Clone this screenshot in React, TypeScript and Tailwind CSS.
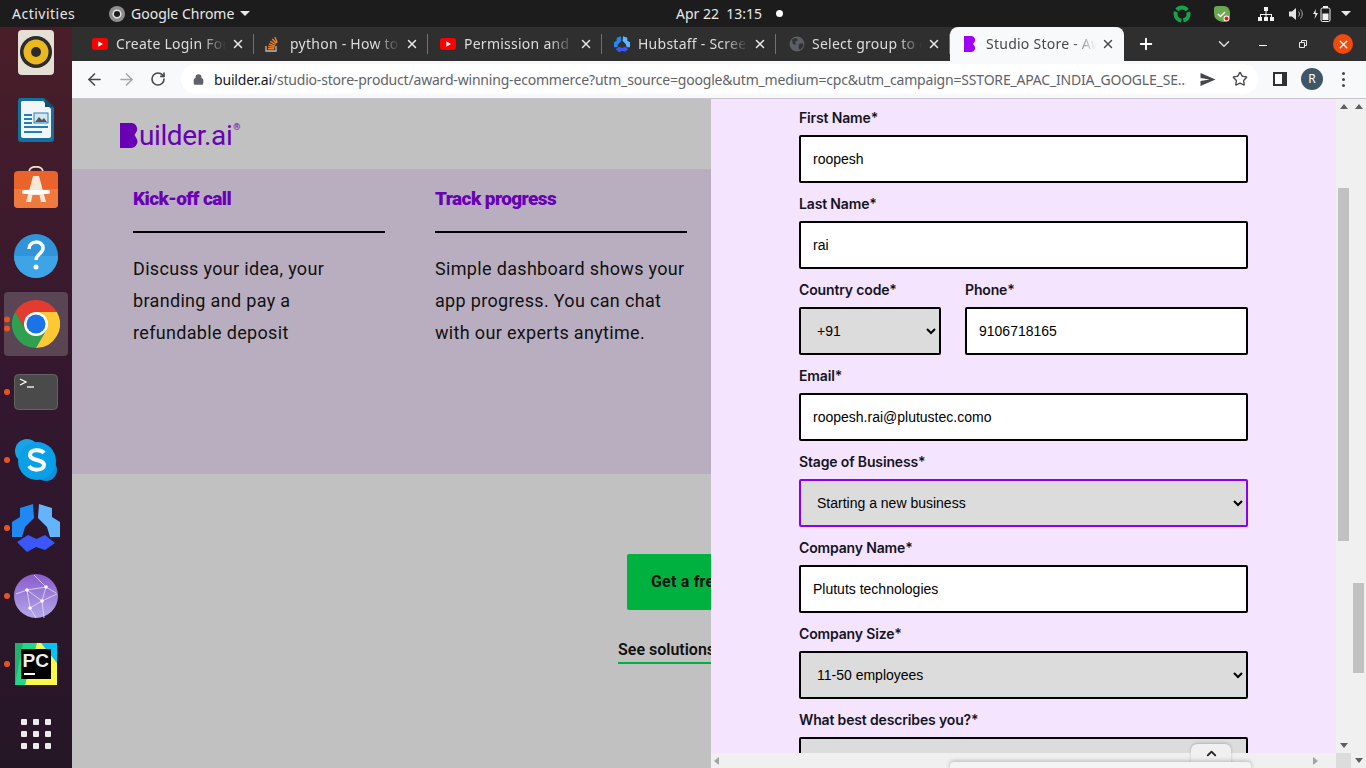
import { ArrowLeft, ArrowRight, ChevronDown, ChevronUp, Lock, Plus, RotateCw, Star, X } from 'lucide-react';

const uiFont = "font-['Noto_Sans',sans-serif]";

const YouTube = () => (
  <svg width="16" height="12" viewBox="0 0 16 12">
    <rect width="16" height="12" rx="3" fill="#f00" />
    <path d="M6.3 3.2 11 6 6.3 8.8z" fill="#fff" />
  </svg>
);

const StackOverflow = () => (
  <svg width="14" height="16" viewBox="0 0 14 16">
    <path d="M1 10v5h10v-5" fill="none" stroke="#bcbbbb" strokeWidth="1.3" />
    <path d="M3 12.7h6.2M3.2 10.5l6.2.8M3.9 8l5.9 1.8M5.3 5.4l5.3 3.1M7.2 3l4.2 4.3M9.8 1l2.4 5.6" stroke="#f48024" strokeWidth="1.4" />
  </svg>
);

// same mark as the dock icon, the tab just shows it smaller
const HubstaffMark = ({ size }: { size: number }) => (
  <svg width={size} height={size * 50 / 48} viewBox="0 0 48 50">
    <path d="M8 5 21 1 22 15 13 24 10 34H0V19L8 14z" fill="#2088f2" />
    <path d="M40 5 27 1 26 15 35 24 38 34H48V19L40 14z" fill="#63b4ff" />
    <path d="M5 39 16 32 24.500 36 33 32 43 40 33 47 24 44 15 49z" fill="#3a57fa" />
  </svg>
);

const GlobeFavicon = () => (
  <svg width="16" height="16" viewBox="0 0 16 16">
    <circle cx="8" cy="8" r="7.5" fill="#5b5e63" />
    <path d="M3 3.5 7 2l2 2-3 2 1 3-3-1zM10 8l4-1 .5 3-3.5 4-1.500-2z" fill="#303134" />
  </svg>
);

const StudioFavicon = () => (
  <svg width="12" height="16" viewBox="0 0 12 16">
    <path d="M0 0h7a4 4 0 0 1 3.200 6.500L9 8l1.200 1.500A4 4 0 0 1 7 16H0z" fill="#a000f8" />
  </svg>
);

const tabs = [
  { title: 'Create Login Form', icon: <YouTube />, iconWidth: 'pl-3', textGap: 'ml-2' },
  { title: 'python - How to fix', icon: <StackOverflow />, iconWidth: 'pl-[10px]', textGap: 'ml-[10px]' },
  { title: 'Permission and Access', icon: <YouTube />, iconWidth: 'pl-3', textGap: 'ml-2' },
  { title: 'Hubstaff - Screenshots', icon: <HubstaffMark size={16} />, iconWidth: 'pl-3', textGap: 'ml-2' },
  { title: 'Select group to change', icon: <GlobeFavicon />, iconWidth: 'pl-[13px]', textGap: 'ml-[7px]' },
];

const tabTextClass =
  'w-[110px] overflow-hidden whitespace-nowrap pb-[2px] text-[14px] tracking-[0.25px] [mask-image:linear-gradient(to_right,black_78%,transparent_100%)]';

function Tab({ title, icon, iconWidth, textGap }: { title: string; icon: React.ReactNode; iconWidth: string; textGap: string }) {
  return (
    <div className={`flex h-[34px] w-[174px] shrink-0 items-center ${iconWidth}`}>
      <span className="flex w-4 shrink-0 justify-center">{icon}</span>
      <span className={`${tabTextClass} text-[#dcdddd] ${textGap}`}>{title}</span>
      <X size={14} strokeWidth={2.5} className="ml-auto mr-[8px] text-[#e8eaed]" />
      <span className="h-5 w-px bg-[#6f7174]" />
    </div>
  );
}

function TabStrip() {
  return (
    <div className={`flex h-[34px] items-center bg-[#2f2f2f] pl-2 ${uiFont}`}>
      {tabs.map((t) => (
        <Tab key={t.title} {...t} />
      ))}
      <div className="flex h-[34px] w-[174px] shrink-0 items-center rounded-t-[8px] bg-[#f8f9fa] pl-[14px]">
        <StudioFavicon />
        <span className={`${tabTextClass} ml-[10px] text-[#45474a]`}>Studio Store - Award</span>
        <X size={14} strokeWidth={2.5} className="ml-auto mr-[9px] text-[#45474a]" />
      </div>
      <Plus size={18} strokeWidth={2.5} className="ml-[13px] text-white" />
      <ChevronDown size={18} strokeWidth={2} className="ml-[60px] text-[#dcdddd]" />
      <span className="ml-[26px] mt-[2px] h-px w-2 bg-white" />
      <svg width="8" height="8" viewBox="0 0 8 8" className="ml-[32px]">
        <path d="M.5 2.500h5v5h-5zM2.500 2.500V.5h5v5h-2" fill="none" stroke="#e8eaed" />
      </svg>
      <span className="ml-[26px] flex h-5 w-5 items-center justify-center rounded-full bg-[#ef4b0d]">
        <X size={13} strokeWidth={2.5} className="text-white" />
      </span>
    </div>
  );
}

function Toolbar() {
  return (
    <div className={`flex h-[38px] items-center border-b border-[#c9c4cc] bg-[#f8f9fa] pb-px ${uiFont}`}>
      <ArrowLeft size={19} strokeWidth={2} className="ml-[13px] text-[#45474a]" />
      <ArrowRight size={19} strokeWidth={2} className="ml-[13px] text-[#a5a7a9]" />
      <RotateCw size={16} strokeWidth={2.4} className="ml-[14px] text-[#45474a]" />
      <div className="ml-[15px] flex h-[30px] w-[1077px] shrink-0 items-center rounded-full bg-white pl-[12px]">
        <Lock size={11} strokeWidth={3} className="shrink-0 text-[#5f6368]" fill="#5f6368" />
        <span className="ml-[10px] w-[972px] shrink-0 overflow-hidden whitespace-nowrap text-[14px] tracking-[-0.19px] text-[#5f6368]">
          <span className="text-[#111827]">builder.ai</span>
          /studio-store-product/award-winning-ecommerce?utm_source=google&amp;utm_medium=cpc&amp;utm_campaign=SSTORE_APAC_INDIA_GOOGLE_SE...
        </span>
        <svg width="16" height="13" viewBox="0 0 16 13" className="ml-[14px] shrink-0">
          <path d="M.5 0 15.500 6.500.5 13V8l9-1.500L.5 5z" fill="#45474a" />
        </svg>
        <Star size={16} strokeWidth={2} className="ml-[16px] shrink-0 text-[#45474a]" />
      </div>
      <svg width="14" height="14" viewBox="0 0 14 14" className="ml-[15px] shrink-0">
        <path d="M1 1h12v12H1z" fill="#fff" stroke="#303134" strokeWidth="2" />
        <path d="M9 1h4v12H9z" fill="#303134" />
      </svg>
      <span className="ml-[14px] flex h-[22px] w-[22px] shrink-0 items-center justify-center rounded-full bg-[#3f5666] text-[12px] text-white">R</span>
      <span className="ml-[19px] flex flex-col gap-[3px]">
        <span className="h-[3px] w-[3px] rounded-full bg-[#45474a]" />
        <span className="h-[3px] w-[3px] rounded-full bg-[#45474a]" />
        <span className="h-[3px] w-[3px] rounded-full bg-[#45474a]" />
      </span>
    </div>
  );
}

function TopBar() {
  return (
    <div className={`relative z-10 flex h-[27px] items-center bg-[#1c1c1c] text-[14px] text-[#e8e8e8] ${uiFont}`}>
      <span className="ml-3 w-[63px] tracking-[0.5px]">Activities</span>
      <svg width="16" height="16" viewBox="0 0 16 16" className="ml-[34px]">
        <circle cx="8" cy="8" r="8" fill="#8e8e8e" />
        <circle cx="8" cy="8" r="3.800" fill="#1c1c1c" stroke="#e4e4e4" strokeWidth="1.500" />
      </svg>
      <span className="ml-[6px] w-[104px]">Google Chrome</span>
      <span className="ml-[5px] h-0 w-0 border-x-[5px] border-t-[5px] border-x-transparent border-t-[#e8e8e8]" />
      <span className="ml-[426px] w-[87px] whitespace-nowrap">Apr 22&nbsp; 13:15</span>
      <span className="ml-[13px] h-[7px] w-[7px] rounded-full bg-white" />
      <svg width="18" height="18" viewBox="0 0 18 18" className="ml-[390px]">
        <circle cx="9" cy="9" r="6.500" fill="none" stroke="#14a44d" strokeWidth="4" strokeDasharray="11.600 2" strokeDashoffset="3" />
      </svg>
      <svg width="18" height="18" viewBox="0 0 18 18" className="ml-[22px]">
        <path d="M1 4q0-3 3-3h7q5 0 6 6v4q-1 6-7 6-9-1-9-9z" fill="#6aa84f" />
        <path d="M5 9l2.500 2.500L12 7" fill="none" stroke="#fff" strokeWidth="1.500" />
        <circle cx="13.500" cy="13.500" r="3" fill="#fff" />
        <circle cx="13.500" cy="13.500" r="2" fill="#e0201b" />
      </svg>
      <svg width="16" height="14" viewBox="0 0 16 14" className="ml-[27px]">
        <path d="M6 0h4v4H6zM0 10h4v4H0zM6 10h4v4H6zM12 10h4v4h-4zM7.500 4h1v3h5.500v3h-1V8H8.500v2h-1V8H3v2H2V7h5.500z" fill="#f2f2f2" />
      </svg>
      <svg width="15" height="14" viewBox="0 0 15 14" className="ml-[15px]">
        <path d="M0 4.500h3L7 1v12L3 9.500H0z" fill="#e4e4e4" />
        <path d="M9.500 4.500a3.500 3.500 0 0 1 0 5M11.500 2.500a6.500 6.500 0 0 1 0 9" fill="none" stroke="#a9a9a9" />
      </svg>
      <svg width="20" height="16" viewBox="0 0 20 16" className="ml-[9px]">
        <path d="M3 3 0 8h2.500L1.500 13 5 7H2.500z" fill="#f2f2f2" />
        <rect x="8" y="2" width="9" height="13.500" rx="1.500" fill="none" stroke="#f2f2f2" />
        <rect x="10" y="0" width="5" height="2" fill="#f2f2f2" />
        <rect x="9.500" y="7.500" width="6" height="6.500" fill="#f2f2f2" />
      </svg>
      <span className="ml-[8px] h-0 w-0 border-x-[5px] border-t-[5px] border-x-transparent border-t-[#e8e8e8]" />
    </div>
  );
}

function DockItem({ running = 0, active = false, children }: { running?: number; active?: boolean; children: React.ReactNode }) {
  return (
    <div className="relative flex h-[68px] items-center justify-center">
      {active && <span className="absolute inset-x-1 inset-y-0.5 rounded-[4px] bg-[#5a4555]" />}
      <span className="relative">{children}</span>
      {running > 0 && (
        <span className="absolute left-[4px] top-1/2 flex -translate-y-1/2 flex-col gap-[3px]">
          {Array.from({ length: running }).map((_, i) => (
            <span key={i} className="h-[6px] w-[6px] rounded-full bg-[#e95420]" />
          ))}
        </span>
      )}
    </div>
  );
}

function Dock() {
  return (
    <div className="-mt-[9px] flex w-[72px] shrink-0 flex-col bg-gradient-to-b from-[#4a1e28] via-[#33172f] to-[#251626]">
      <DockItem>
        <svg width="36" height="45" viewBox="0 0 36 45">
          <rect width="36" height="45" rx="4" fill="#e4e0d5" />
          <circle cx="18" cy="22" r="16" fill="#2b2b2b" />
          <circle cx="18" cy="22" r="12.500" fill="#eab922" />
          <circle cx="18" cy="22" r="5" fill="#2b2b2b" />
        </svg>
      </DockItem>
      <DockItem>
        <svg width="36" height="44" viewBox="0 0 36 44">
          <path d="M3 0h23l10 10v31a3 3 0 0 1-3 3H3a3 3 0 0 1-3-3V3a3 3 0 0 1 3-3z" fill="#176f9f" />
          <path d="M4 3h21l8 8v27a2 2 0 0 1-2 2H5a2 2 0 0 1-2-2V4z" fill="#f3f6f8" />
          <path d="M27 0l9 9h-9z" fill="#124f72" />
          <path d="M6 16h8v2H6zM6 20h8v2H6zM6 24h8v2H6zM6 28h24v2H6zM6 33h18v2H6z" fill="#1d80b8" />
          <rect x="16" y="15" width="14" height="10" fill="#d6e6f2" stroke="#1d80b8" />
          <path d="M17 24l4-5 3 3 2-2 3 4z" fill="#555" />
        </svg>
      </DockItem>
      <DockItem>
        <svg width="44" height="44" viewBox="0 0 44 44">
          <path d="M15 6c0-7 14-7 14 0" fill="none" stroke="#f0d9c0" strokeWidth="2" />
          <rect y="5" width="44" height="37" rx="4" fill="#e9632b" />
          <path d="M0 23h44v15a4 4 0 0 1-4 4H4a4 4 0 0 1-4-4z" fill="#f07a3e" />
          <path d="M19 10h6l7 26h-5l-1.500-7h-7L17 36h-5z" fill="#fbe7d8" />
          <rect x="8" y="24" width="28" height="4" rx="2" fill="#fff" />
        </svg>
      </DockItem>
      <DockItem>
        <svg width="44" height="44" viewBox="0 0 44 44">
          <circle cx="22" cy="22" r="22" fill="#2f94d9" />
          <path d="M0 22a22 22 0 0 0 44 0z" fill="#3da4e6" />
          <path d="M15 15c0-9 14-9 14-1 0 6-7 6-7 12" fill="none" stroke="#fff" strokeWidth="3.500" />
          <circle cx="22" cy="33" r="2.500" fill="#fff" />
        </svg>
      </DockItem>
      <DockItem active running={2}>
        <svg width="48" height="48" viewBox="0 0 48 48">
          <path d="M24 12H44.800A24 24 0 0 0 3.200 12L13.600 30z" fill="#e33b2e" />
          <path d="M13.600 30 3.200 12A24 24 0 0 0 24 48L34.400 30z" fill="#2fa04f" />
          <path d="M34.400 30 24 48A24 24 0 0 0 44.800 12H24z" fill="#fcc934" />
          <circle cx="24" cy="24" r="12" fill="#fff" />
          <circle cx="24" cy="24" r="9.500" fill="#1a73e8" />
        </svg>
      </DockItem>
      <DockItem running={1}>
        <svg width="44" height="36" viewBox="0 0 44 36">
          <rect x="0.500" y="0.500" width="43" height="35" rx="4" fill="#4a4a4a" stroke="#636363" />
          <path d="M6 5l6 3-6 3" fill="none" stroke="#fff" strokeWidth="1.300" />
          <path d="M13 13h7" stroke="#fff" strokeWidth="1.300" />
        </svg>
      </DockItem>
      <DockItem running={1}>
        <svg width="42" height="42" viewBox="0 0 42 42">
          <circle cx="12" cy="12" r="12" fill="#17a3e6" />
          <circle cx="31" cy="31" r="11" fill="#0f8fd6" />
          <circle cx="22" cy="22" r="19" fill="#0aa0e8" />
          <path d="M29 14c-3-4-14-4-14 2 0 6 14 4 14 10 0 6-12 6-15 1" fill="none" stroke="#fff" strokeWidth="4" />
        </svg>
      </DockItem>
      <DockItem running={1}>
        <HubstaffMark size={48} />
      </DockItem>
      <DockItem running={1}>
        <svg width="44" height="44" viewBox="0 0 44 44">
          <defs>
            <linearGradient id="globeFill" x1="0" y1="0" x2="0" y2="1">
              <stop offset="0" stopColor="#8a5ccb" />
              <stop offset="1" stopColor="#b3a8ea" />
            </linearGradient>
          </defs>
          <circle cx="22" cy="22" r="22" fill="url(#globeFill)" />
          <path d="M2 20l11-4 19-3 10 6M13 16l15 11 15-7M16 34l12-7M13 16l3 18 6 10M32 13l-4 14 2 17M20 1l12 12" fill="none" stroke="#e6def5" strokeWidth="0.800" />
          <circle cx="13" cy="16" r="1.800" fill="#fff" />
          <circle cx="32" cy="13" r="1.800" fill="#fff" />
          <circle cx="28" cy="27" r="1.800" fill="#fff" />
          <circle cx="16" cy="34" r="1.800" fill="#fff" />
        </svg>
      </DockItem>
      <DockItem running={1}>
        <svg width="42" height="42" viewBox="0 0 42 42">
          <rect width="42" height="42" fill="#21d789" />
          <path d="M22 0h20v42H10z" fill="#fcf84a" />
          <path d="M26 0h16v20z" fill="#07c3f2" />
          <path d="M0 0h8L0 42z" fill="#1fb26f" />
          <rect x="6" y="6" width="30" height="30" fill="#000" />
          <text x="7.500" y="24" fontFamily="Liberation Sans, sans-serif" fontWeight="700" fontSize="19" fill="#eee">PC</text>
          <rect x="9" y="30" width="11" height="2" fill="#fff" />
        </svg>
      </DockItem>
      <div className="grid h-[68px] grid-cols-3 content-center justify-center gap-[6px] px-[21px] pt-1">
        {Array.from({ length: 9 }).map((_, i) => (
          <span key={i} className="h-[6px] w-[6px] rounded-[1px] bg-[#ececec]" />
        ))}
      </div>
    </div>
  );
}

function FeatureColumn({ title, lines }: { title: string; lines: string[] }) {
  return (
    <div className="w-[252px]">
      <h3 className="border-b-2 border-black pb-[20px] pt-px text-[19px] font-black leading-[24px] tracking-[-0.6px] text-[#6a00b5]">{title}</h3>
      <div className="mt-5 text-[18px] leading-[32px] tracking-[0.33px] text-[#111]">
        {lines.map((line) => (
          <p key={line} className="whitespace-nowrap">{line}</p>
        ))}
      </div>
    </div>
  );
}

function LandingPage() {
  return (
    <div className="w-[639px] shrink-0 overflow-hidden bg-[#c1c1c1] font-['Roboto',sans-serif]">
      <div className="flex h-[70px] items-start pl-12 pt-6">
        <svg width="18" height="25" viewBox="0 0 18 25" className="shrink-0">
          <path d="M0 0h11a6 6 0 0 1 5 9.500L14.500 12l1.500 2.500A6.500 6.500 0 0 1 11 25H0z" fill="#6a00b5" />
        </svg>
        <span className="ml-px -mt-[3px] text-[28px] font-normal leading-[32px] tracking-[-0.4px] text-[#6a00b5]">uilder.ai</span>
        <span className="ml-[1px] text-[9px] leading-none text-[#6a00b5]">®</span>
      </div>
      <div className="flex h-[305px] gap-[50px] bg-[#b9aec0] pl-[61px] pt-[17px]">
        <FeatureColumn title="Kick-off call" lines={['Discuss your idea, your', 'branding and pay a', 'refundable deposit']} />
        <FeatureColumn title="Track progress" lines={['Simple dashboard shows your', 'app progress. You can chat', 'with our experts anytime.']} />
      </div>
      <div className="pl-[555px] pt-20">
        <div className="flex h-14 w-[200px] items-center rounded-[2px] bg-[#00b140] pl-6 text-[16px] font-bold tracking-[0.2px] whitespace-nowrap text-[#111]">Get a free demo</div>
      </div>
      <div className="ml-[546px] mt-[28px] w-[200px] border-b-2 border-[#00b140] text-[16px] font-semibold leading-[24px] whitespace-nowrap text-[#111]">See solutions</div>
    </div>
  );
}

function Label({ children }: { children: React.ReactNode }) {
  return <label className="mb-[5px] block h-6 text-[14px] font-semibold leading-6 tracking-[-0.15px] text-[#14141e]">{children}</label>;
}

const inputClass = "block h-12 w-full rounded-[2px] border-2 border-black bg-white px-3 font-['Liberation_Sans',sans-serif] text-[14px] text-black";
const selectClass = "block h-12 w-full rounded-[2px] border-2 bg-[#dcdcdc] pl-3 font-['Liberation_Sans',sans-serif] text-[14px] text-black";

function TextField({ label, value }: { label: string; value: string }) {
  return (
    <div className="mb-[9px]">
      <Label>{label}</Label>
      <input className={inputClass} defaultValue={value} />
    </div>
  );
}

function SelectField({ label, value, focused = false }: { label: string; value: string; focused?: boolean }) {
  return (
    <div className="mb-[9px]">
      <Label>{label}</Label>
      <select className={`${selectClass} ${focused ? 'border-[#8a00f0]' : 'border-black'}`} defaultValue={value}>
        <option value={value}>{value}</option>
      </select>
    </div>
  );
}

function SignupPanel() {
  return (
    <div className="h-[654px] overflow-hidden bg-[#f4e4fe] pl-[88px] pr-[88px] pt-[7px] font-['Inter',sans-serif]">
      <TextField label="First Name*" value="roopesh" />
      <TextField label="Last Name*" value="rai" />
      <div className="flex gap-6">
        <div className="w-[142px] shrink-0">
          <SelectField label="Country code*" value="+91" />
        </div>
        <div className="flex-1">
          <TextField label="Phone*" value="9106718165" />
        </div>
      </div>
      <TextField label="Email*" value="roopesh.rai@plutustec.como" />
      <SelectField label="Stage of Business*" value="Starting a new business" focused />
      <TextField label="Company Name*" value="Plututs technologies" />
      <SelectField label="Company Size*" value="11-50 employees" />
      <SelectField label="What best describes you?*" value="" />
    </div>
  );
}

function VScrollbar({ thumbTop, thumbHeight }: { thumbTop: string; thumbHeight: string }) {
  return (
    <div className="flex w-[15px] shrink-0 flex-col items-center bg-[#f0f0f0]">
      <span className="mt-[5px] h-0 w-0 border-x-[4px] border-b-[5px] border-x-transparent border-b-[#5f5f5f]" />
      <span className={`w-[11px] bg-[#c1c1c1] ${thumbTop} ${thumbHeight}`} />
      <span className="mb-[5px] mt-auto h-0 w-0 border-x-[4px] border-t-[5px] border-x-transparent border-t-[#5f5f5f]" />
    </div>
  );
}

export default function App() {
  return (
    <div className="flex h-[768px] w-[1366px] flex-col overflow-hidden">
      <TopBar />
      <div className="flex min-h-0 flex-1">
        <Dock />
        <div className="flex min-w-0 flex-1 flex-col">
          <TabStrip />
          <Toolbar />
          <div className="relative flex min-h-0 flex-1">
            <LandingPage />
            <div className="flex w-[640px] shrink-0 flex-col">
              <div className="flex min-h-0 flex-1">
                <div className="w-[625px] shrink-0">
                  <SignupPanel />
                </div>
                <VScrollbar thumbTop="mt-[79px]" thumbHeight="h-[353px]" />
              </div>
              <div className="flex h-[15px] shrink-0 items-center bg-[#f0f0f0]">
                <span className="ml-[3px] h-0 w-0 border-y-[4px] border-r-[5px] border-y-transparent border-r-[#a3a3a3]" />
                <span className="ml-auto mr-[18px] h-0 w-0 border-y-[4px] border-l-[5px] border-y-transparent border-l-[#a3a3a3]" />
                <span className="h-[15px] w-[15px] bg-[#dcdcdc]" />
              </div>
            </div>
            <VScrollbar thumbTop="mt-[474px]" thumbHeight="h-[90px]" />
            <div className="absolute left-[1119px] top-[645px] flex h-[24px] w-10 justify-center rounded-t-[6px] bg-[#f0f0f0] pt-[2px] shadow-[0_-1px_3px_rgba(0,0,0,0.2)]">
              <ChevronUp size={15} strokeWidth={3} className="text-[#222]" />
            </div>
            <div className="absolute left-[878px] top-[663px] h-[8px] w-[301px] rounded-t-[4px] bg-[#f4f4f4] shadow-[0_-1px_4px_rgba(0,0,0,0.25)]" />
          </div>
        </div>
      </div>
    </div>
  );
}
